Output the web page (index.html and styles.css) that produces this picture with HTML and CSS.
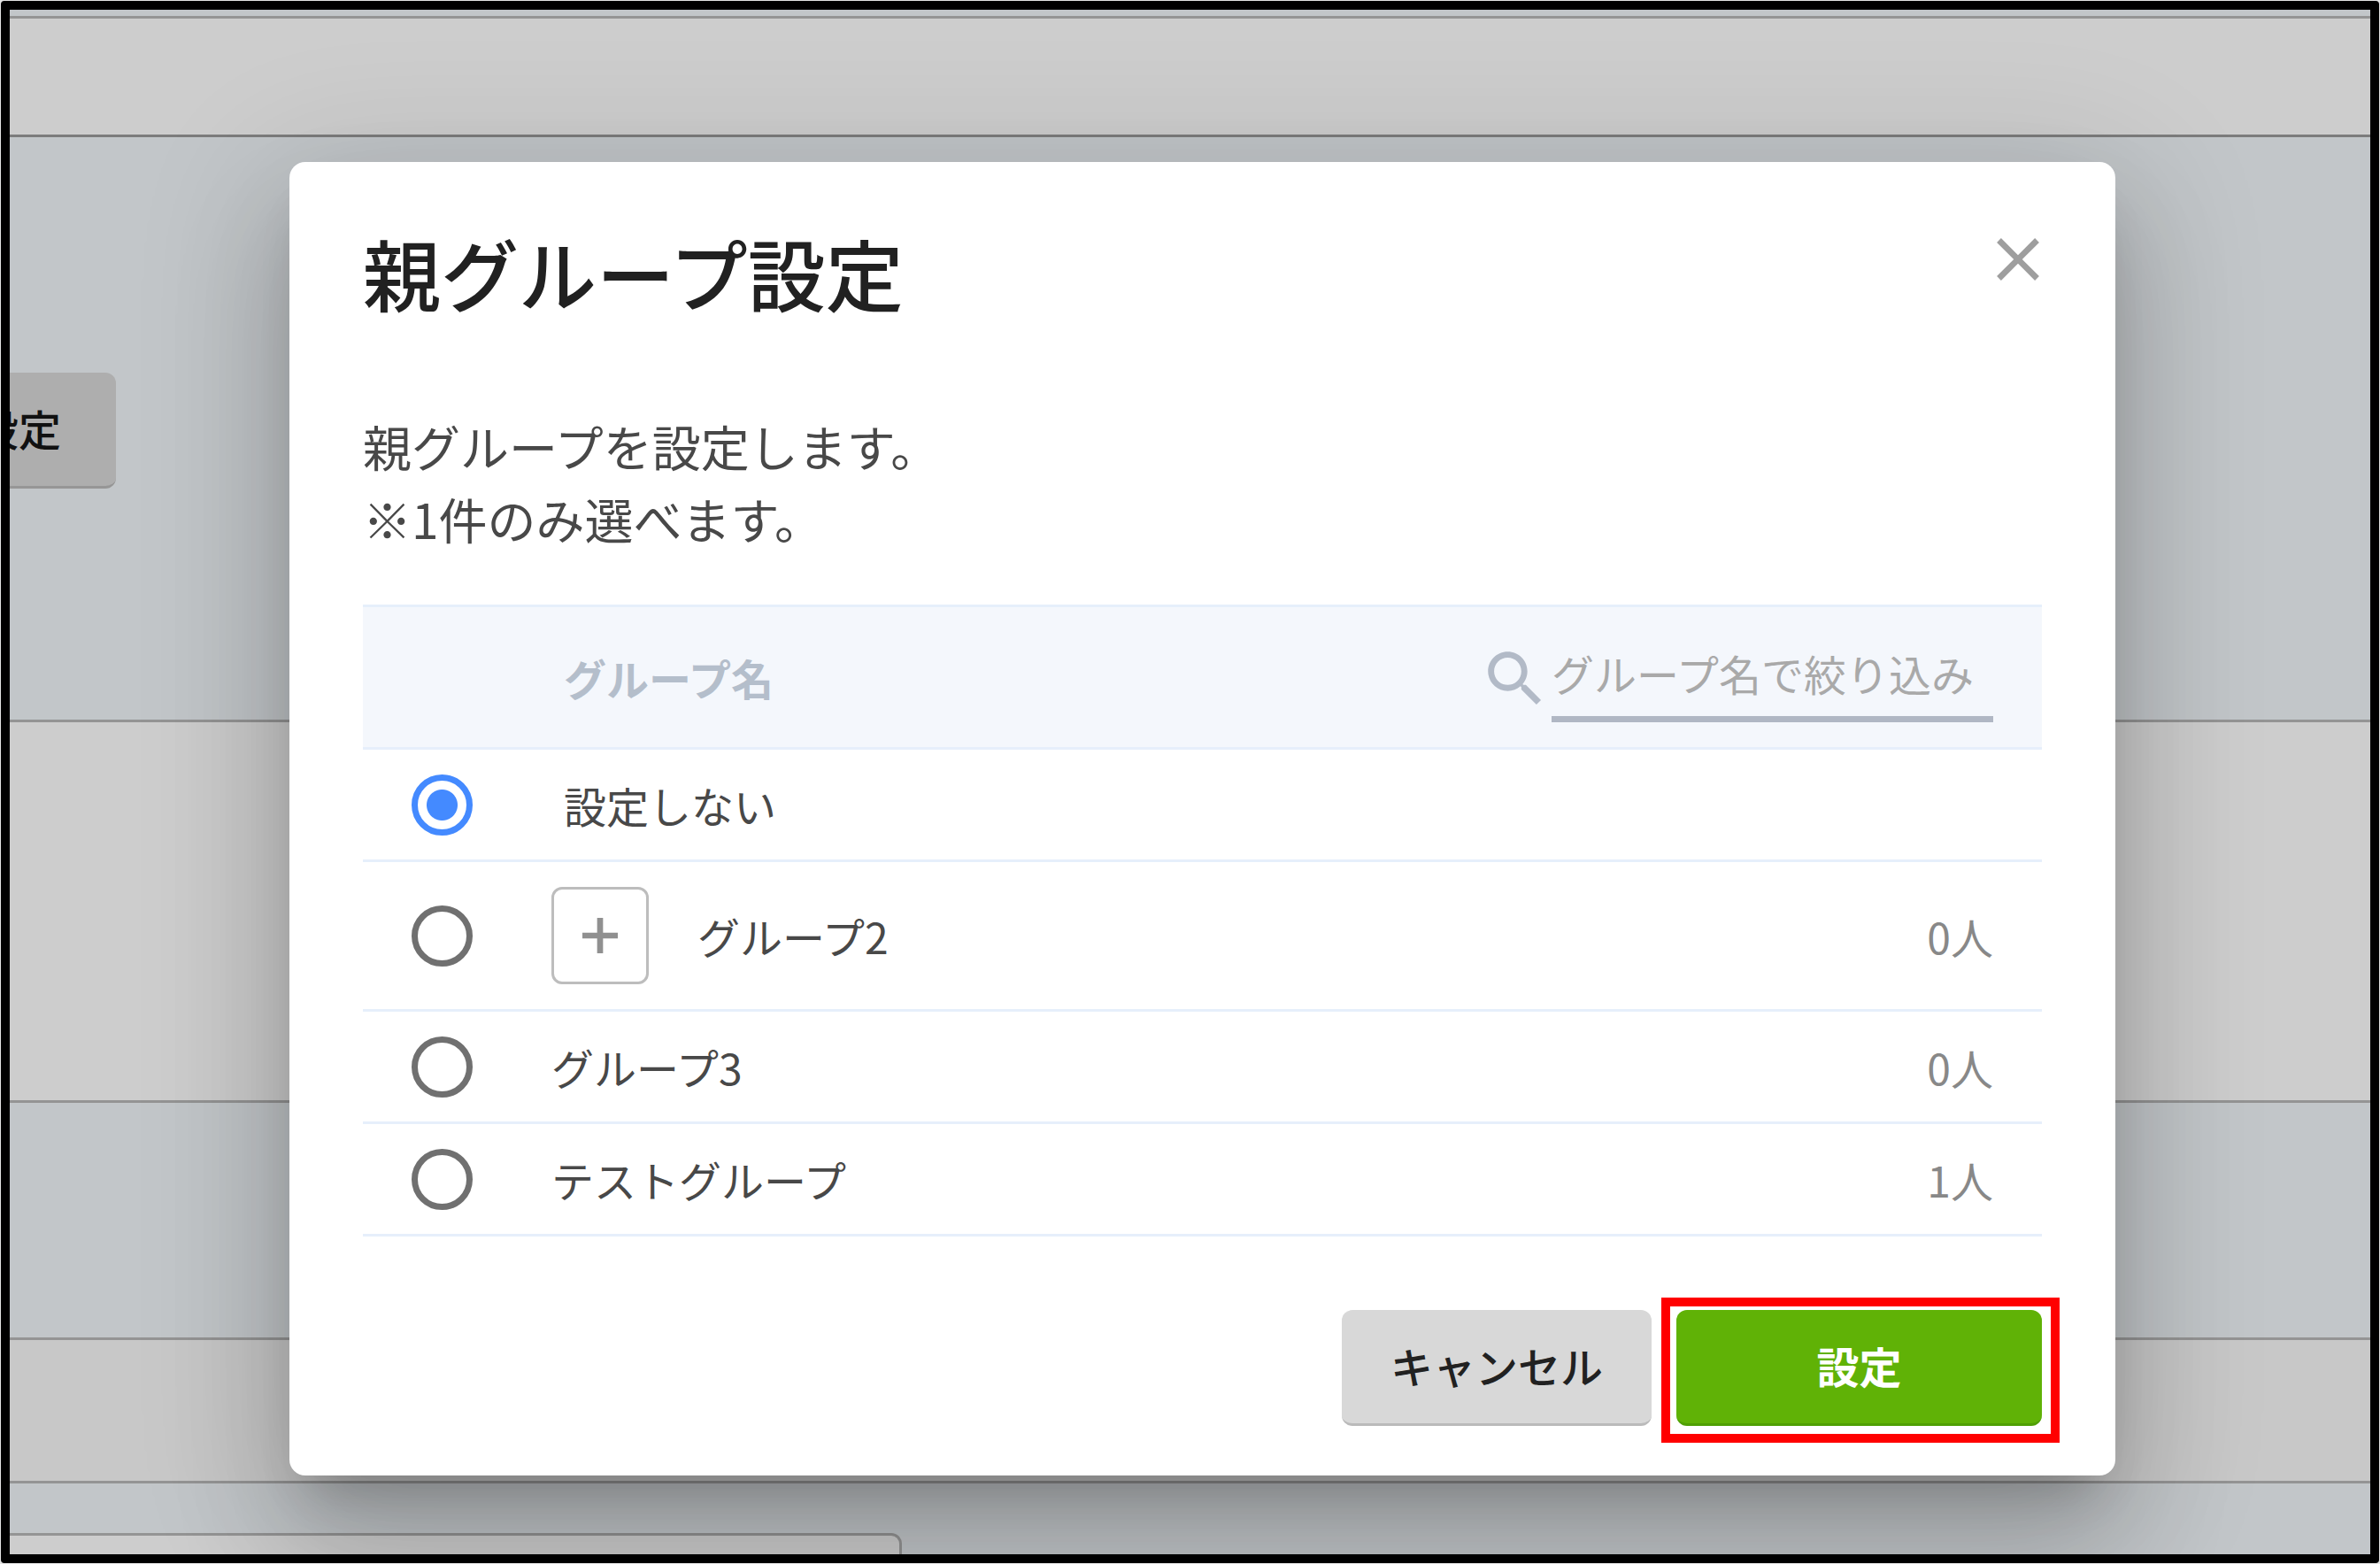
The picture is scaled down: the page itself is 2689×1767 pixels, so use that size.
FILE: index.html
```html
<!DOCTYPE html>
<html lang="ja">
<head>
  <meta charset="UTF-8">
  <meta name="viewport" content="width=device-width, initial-scale=1.0">
  <title>親グループ設定</title>
  <link rel="stylesheet" href="styles.css">
</head>
<body>
  <div class="frame">
    <!-- page behind the dialog -->
    <div class="page">
      <div class="band band-top"></div>
      <div class="toolbar">
        <button type="button" class="btn btn-back">設定</button>
      </div>
      <div class="band band-middle"></div>
      <div class="space"></div>
      <div class="band band-lower"></div>
      <div class="page-footer">
        <div class="panel"></div>
      </div>
    </div>

    <div class="overlay">
      <div class="modal" role="dialog" aria-labelledby="modalTitle">
        <div class="modal-header">
          <h1 class="modal-title" id="modalTitle">親グループ設定</h1>
          <button type="button" class="close" aria-label="閉じる">
            <svg class="icon" viewBox="0 0 24 24"><path d="M19 6.41L17.59 5 12 10.59 6.41 5 5 6.41 10.59 12 5 17.59 6.41 19 12 13.41 17.59 19 19 17.59 13.41 12z"/></svg>
          </button>
        </div>
        <p class="description">親グループを設定します。<br>※1件のみ選べます。</p>

        <table class="groups">
          <thead>
            <tr>
              <th class="col-radio"></th>
              <th class="col-name indent">グループ名</th>
              <th class="col-count">
                <div class="search">
                  <label for="filter" aria-label="グループ名で絞り込み">
                    <svg class="icon" viewBox="0 0 24 24"><path d="M15.5 14h-.79l-.28-.27C15.41 12.59 16 11.11 16 9.5 16 5.91 13.09 3 9.5 3S3 5.91 3 9.5 5.91 16 9.5 16c1.61 0 3.09-.59 4.23-1.57l.27.28v.79l5 4.99L20.49 19l-4.99-5zm-6 0C7.01 14 5 11.99 5 9.5S7.01 5 9.5 5 14 7.01 14 9.5 11.99 14 9.5 14z"/></svg>
                  </label>
                  <input type="text" id="filter" placeholder="グループ名で絞り込み">
                </div>
              </th>
            </tr>
          </thead>
          <tbody>
            <tr>
              <td class="col-radio"><input type="radio" name="group" id="group0" checked></td>
              <td class="col-name indent"><label for="group0">設定しない</label></td>
              <td class="col-count"></td>
            </tr>
            <tr class="parent">
              <td class="col-radio"><input type="radio" name="group" id="group2"></td>
              <td class="col-name">
                <div class="name">
                  <button type="button" class="expand" aria-label="開く">
                    <svg viewBox="0 0 12 12"><path d="M6 0v12M0 6h12"/></svg>
                  </button>
                  <label for="group2">グループ2</label>
                </div>
              </td>
              <td class="col-count">0人</td>
            </tr>
            <tr>
              <td class="col-radio"><input type="radio" name="group" id="group3"></td>
              <td class="col-name"><label for="group3">グループ3</label></td>
              <td class="col-count">0人</td>
            </tr>
            <tr>
              <td class="col-radio"><input type="radio" name="group" id="group4"></td>
              <td class="col-name"><label for="group4">テストグループ</label></td>
              <td class="col-count">1人</td>
            </tr>
          </tbody>
        </table>

        <div class="actions">
          <button type="button" class="btn btn-cancel">キャンセル</button>
          <div class="highlight">
            <button type="button" class="btn btn-submit">設定</button>
          </div>
        </div>
      </div>
    </div>
  </div>
</body>
</html>
```
FILE: styles.css
```css
* {
  box-sizing: border-box;
}
body {
  margin: 0;
  padding: 1px;
  background: #e4e4e4;
  font-family: "Noto Sans CJK JP", sans-serif;
  font-size: 48px;
  color: #484848;
}
button,
input {
  font-family: inherit;
  font-size: inherit;
}
.frame {
  position: relative;
  height: calc(100vh - 2px);
  border: 10px solid #000;
  border-radius: 4px;
  overflow: hidden;
}

/* background page */
.page {
  display: flex;
  flex-direction: column;
  height: 100%;
  padding-top: 7px;
  background: #c2c6c9;
}
.band {
  flex: none;
  border-top: 3px solid #949494;
  border-bottom: 3px solid #949494;
  background: #cdcdcd;
}
.band-top {
  height: 137px;
  border-bottom-color: #7c7c7c;
}
.toolbar {
  flex: none;
  height: 658px;
  padding-top: 266px;
}
.band-middle {
  height: 433px;
}
.space {
  flex: none;
  height: 265px;
}
.band-lower {
  height: 165px;
  background: #c8c8c8;
}
.page-footer {
  flex: 1;
  padding-top: 56px;
  overflow: hidden;
}
.panel {
  width: 1008px;
  height: 100px;
  border: 3px solid #949494;
  border-left: none;
  border-radius: 0 12px 0 0;
  background: #cdcdcd;
}

/* buttons */
.btn {
  height: 131px;
  padding: 0 55px 4px;
  border: none;
  border-bottom: 3px solid #bababa;
  border-radius: 12px;
  background: #d8d8d8;
  color: #212121;
  font-weight: 500;
  line-height: 72px;
  white-space: nowrap;
  cursor: pointer;
}
.btn-back {
  display: flex;
  align-items: center;
  justify-content: flex-end;
  width: 120px;
  padding: 0 62px 4px 0;
  border-radius: 0 12px 12px 0;
  border-bottom-color: #969696;
  background: #aeaeae;
  color: #111;
}
.btn-submit {
  width: 413px;
  border-bottom-color: #4f9f04;
  background: #60b206;
  color: #fff;
  font-weight: bold;
}

/* dialog */
.overlay {
  position: absolute;
  top: 0;
  right: 0;
  bottom: 0;
  left: 0;
  padding: 172px 288px 89px 316px;
}
.modal {
  padding: 69px 83px 56px;
  border-radius: 18px;
  background: #fff;
  box-shadow: 0 38px 52px -24px rgba(0, 0, 0, 0.2),
    0 83px 131px 10px rgba(0, 0, 0, 0.14),
    0 31px 158px 28px rgba(0, 0, 0, 0.12);
}
.modal-header {
  display: flex;
  align-items: flex-start;
  justify-content: space-between;
  margin-bottom: 100px;
}
.modal-title {
  margin: 0;
  color: #212121;
  font-size: 88px;
  font-weight: 500;
  line-height: 110px;
}
.icon {
  display: block;
  width: 82px;
  height: 82px;
  fill: currentColor;
}
.close {
  margin-right: -14px;
  padding: 0;
  border: none;
  background: none;
  color: #9e9e9e;
  cursor: pointer;
}
.description {
  margin: 0 0 57px;
  font-size: 55px;
  line-height: 82px;
}

/* group list */
.groups {
  width: 100%;
  border-collapse: separate;
  border-spacing: 0;
}
.groups th,
.groups td {
  height: 127px;
  padding: 0;
  border-bottom: 3px solid #e6effb;
  line-height: 72px;
  text-align: left;
  vertical-align: middle;
}
.groups th {
  height: 164px;
  border-top: 3px solid #e6effb;
  background: #f4f7fc;
  color: #b4becb;
}
.groups .parent td {
  height: 169px;
}
.groups .col-radio {
  width: 213px;
  padding-left: 55px;
}
.groups .indent {
  padding-left: 14px;
}
.groups .col-count {
  width: 640px;
  padding-right: 55px;
  color: #888;
  text-align: right;
}
.groups input[type="radio"] {
  display: block;
  width: 69px;
  height: 69px;
  margin: 0;
  border: 7px solid #707070;
  border-radius: 50%;
  appearance: none;
}
.groups input[type="radio"]:checked {
  border-color: #448aff;
  background: radial-gradient(circle, #448aff 17px, #fff 18px);
}
.name {
  display: flex;
  align-items: center;
  gap: 55px;
}
.expand {
  display: flex;
  align-items: center;
  justify-content: center;
  width: 110px;
  height: 110px;
  padding: 0;
  border: 3px solid #bdbdbd;
  border-radius: 12px;
  background: #fff;
}
.expand svg {
  width: 40px;
  height: 40px;
  fill: none;
  stroke: #909090;
  stroke-width: 2;
}
.search {
  display: flex;
  align-items: center;
  justify-content: flex-end;
}
.search label {
  padding-top: 4px;
  color: #b2bac7;
}
.search input {
  width: 499px;
  height: 102px;
  padding: 0 0 4px;
  border: none;
  border-bottom: 7px solid #b0b7c4;
  background: none;
  outline: none;
}
.search input::placeholder {
  color: #a9a9a9;
}

/* footer */
.actions {
  display: flex;
  justify-content: flex-end;
  gap: 28px;
  margin-top: 83px;
}
.highlight {
  position: relative;
}
.highlight::after {
  content: "";
  position: absolute;
  top: -14px;
  right: -20px;
  bottom: -19px;
  left: -17px;
  border: 10px solid #f00;
  pointer-events: none;
}
```
